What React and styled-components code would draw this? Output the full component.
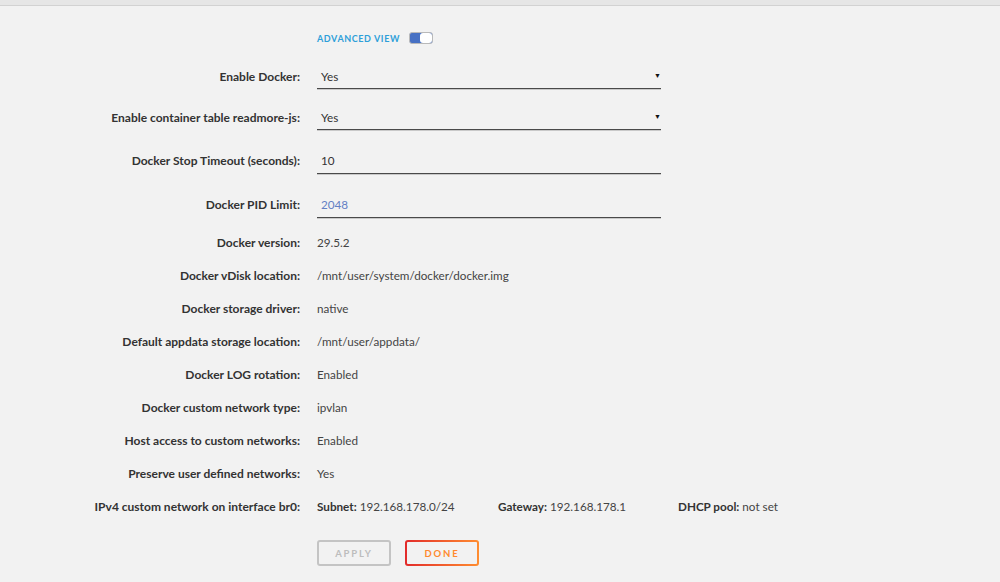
import React from 'react';
import styled, { createGlobalStyle, css } from 'styled-components';

const GlobalStyle = createGlobalStyle`
  html, body {
    margin: 0;
    padding: 0;
    background: #f2f2f2;
  }
  body {
    font-family: 'Lato', 'Noto Sans', sans-serif;
    color: #3a3a3a;
  }
`;

const Page = styled.div`
  width: 1000px;
  height: 582px;
  background: #f2f2f2;
  overflow: hidden;
`;

const TopBar = styled.div`
  height: 5px;
  background: #e6e6e6;
  border-bottom: 1px solid #d2d2d2;
`;

const Form = styled.div`
  display: grid;
  grid-template-columns: 300px 344px;
  column-gap: 17px;
  row-gap: 16px;
  padding-top: 25px;
  align-items: center;
`;

const Label = styled.div`
  text-align: right;
  font-size: 12px;
  font-weight: 700;
  color: #333;
  white-space: nowrap;
`;

const Value = styled.div`
  font-size: 11.7px;
  color: #444;
  height: 17px;
  line-height: 17px;
  white-space: nowrap;
`;

const ToggleRow = styled.div`
  grid-column: 2;
  display: flex;
  align-items: center;
  gap: 9px;
  height: 14px;
  margin-bottom: 3px;
`;

const AdvancedText = styled.span`
  font-size: 9px;
  font-weight: 700;
  letter-spacing: 0.6px;
  color: #2e9fd9;
`;

const Toggle = styled.span`
  display: inline-flex;
  width: 24px;
  height: 12px;
  border: 1px solid #b9b9b9;
  border-radius: 3px;
  background: #4771c4;
  box-sizing: border-box;
  justify-content: flex-end;
`;

const Knob = styled.span`
  width: 12px;
  height: 10px;
  background: #fff;
  border-radius: 3px;
`;

const Field = styled.div`
  position: relative;
  display: flex;
  align-items: center;
  box-sizing: border-box;
  padding-left: 4px;
  font-size: 11.7px;
  color: ${(p) => (p.$accent ? '#6480c4' : '#333')};
  border-bottom: 1px solid #4a4a4a;
  box-shadow: 0 1px 0 #c9c9c9;
  height: ${(p) => (p.$select ? '25px' : '28px')};
`;

const Arrow = styled.span`
  position: absolute;
  right: 0;
  top: 50%;
  transform: translateY(-60%);
  font-size: 7px;
  color: #111;
`;

const Triple = styled.div`
  display: grid;
  grid-template-columns: 181px 180px 150px;
  font-size: 11.7px;
  color: #444;
  height: 17px;
  line-height: 17px;
  white-space: nowrap;
`;

const Strong = styled.b`
  color: #333;
  font-weight: 700;
`;

const Buttons = styled.div`
  grid-column: 2;
  display: flex;
  gap: 14px;
  margin-top: 9px;
`;

const Button = styled.button`
  width: 74px;
  height: 26px;
  box-sizing: border-box;
  font-family: inherit;
  font-size: 9.5px;
  font-weight: 700;
  letter-spacing: 1.8px;
  border-radius: 3px;
  background: transparent;
  cursor: pointer;
  ${(p) =>
    p.$primary
      ? css`
          color: #ff8a2e;
          border: 2px solid transparent;
          background: linear-gradient(#f2f2f2, #f2f2f2) padding-box,
            linear-gradient(90deg, #e22b2b, #ff8d30) border-box;
        `
      : css`
          color: #bdbdbd;
          border: 2px solid #c4c4c4;
        `}
`;

const fields = [
  { label: 'Enable Docker:', value: 'Yes', select: true },
  { label: 'Enable container table readmore-js:', value: 'Yes', select: true },
  { label: 'Docker Stop Timeout (seconds):', value: '10' },
  { label: 'Docker PID Limit:', value: '2048', accent: true },
];

const info = [
  ['Docker version:', '29.5.2'],
  ['Docker vDisk location:', '/mnt/user/system/docker/docker.img'],
  ['Docker storage driver:', 'native'],
  ['Default appdata storage location:', '/mnt/user/appdata/'],
  ['Docker LOG rotation:', 'Enabled'],
  ['Docker custom network type:', 'ipvlan'],
  ['Host access to custom networks:', 'Enabled'],
  ['Preserve user defined networks:', 'Yes'],
];

export default function App() {
  return (
    <Page>
      <GlobalStyle />
      <TopBar />
      <Form>
        <ToggleRow>
          <AdvancedText>ADVANCED VIEW</AdvancedText>
          <Toggle>
            <Knob />
          </Toggle>
        </ToggleRow>
        {fields.map((f) => (
          <React.Fragment key={f.label}>
            <Label>{f.label}</Label>
            <Field $select={f.select} $accent={f.accent}>
              {f.value}
              {f.select && <Arrow>▼</Arrow>}
            </Field>
          </React.Fragment>
        ))}
        {info.map(([label, value]) => (
          <React.Fragment key={label}>
            <Label>{label}</Label>
            <Value>{value}</Value>
          </React.Fragment>
        ))}
        <Label>IPv4 custom network on interface br0:</Label>
        <Triple>
          <span>
            <Strong>Subnet:</Strong> 192.168.178.0/24
          </span>
          <span>
            <Strong>Gateway:</Strong> 192.168.178.1
          </span>
          <span>
            <Strong>DHCP pool:</Strong> not set
          </span>
        </Triple>
        <Buttons>
          <Button>APPLY</Button>
          <Button $primary>DONE</Button>
        </Buttons>
      </Form>
    </Page>
  );
}
